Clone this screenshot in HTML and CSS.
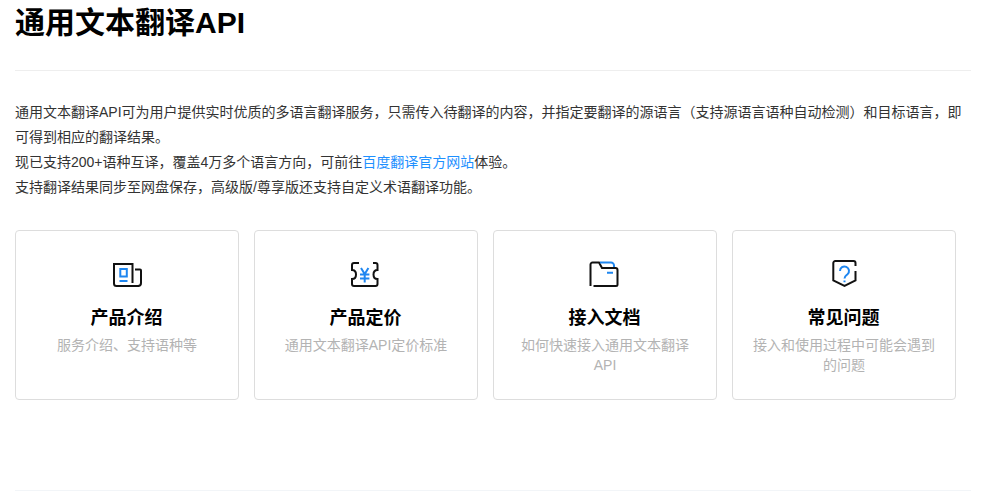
FILE: index.html
```html
<!DOCTYPE html>
<html lang="zh-CN">
<head>
  <meta charset="UTF-8">
  <meta name="viewport" content="width=device-width, initial-scale=1.0">
  <title>通用文本翻译API</title>
  <link rel="stylesheet" href="styles.css">
</head>
<body>

  <div class="page">
    <h1>通用文本翻译API</h1>

    <div class="intro">
      <p>通用文本翻译API可为用户提供实时优质的多语言翻译服务，只需传入待翻译的内容，并指定要翻译的源语言（支持源语言语种自动检测）和目标语言，即可得到相应的翻译结果。</p>
      <p>现已支持200+语种互译，覆盖4万多个语言方向，可前往<a href="#">百度翻译官方网站</a>体验。</p>
      <p>支持翻译结果同步至网盘保存，高级版/尊享版还支持自定义术语翻译功能。</p>
    </div>

    <div class="cards">
      <a class="card" href="#">
        <svg class="card-icon" viewBox="0 0 32 32" fill="none" stroke-width="2">
          <path class="ink" d="M28 27H5.5A2.5 2.5 0 0 1 3 24.5V5h18.500v19"/>
          <path class="ink" d="M24 10.500h5a1 1 0 0 1 1 1V24a3 3 0 0 1-3 3"/>
          <path class="accent" d="M9.300 10h6.500v7.500H9.300zM8.500 22h8"/>
        </svg>
        <h3>产品介绍</h3>
        <p>服务介绍、支持语种等</p>
      </a>
      <a class="card" href="#">
        <svg class="card-icon" viewBox="0 0 32 32" fill="none" stroke-width="2">
          <path class="ink" d="M9 4H4a2 2 0 0 0-2 2v5c2.500 0 4 2 4 4.500S4.500 20 2 20v5a2 2 0 0 0 2 2h21.500a2 2 0 0 0 2-2v-5c-2.500 0-4-2-4-4.500s1.500-4.500 4-4.500V6a2 2 0 0 0-2-2H23"/>
          <path class="accent" d="M11 9l3.700 6 3.700-6M14.700 15v8.500M10 15.500h9.400M10 19.500h9.400"/>
        </svg>
        <h3>产品定价</h3>
        <p>通用文本翻译API定价标准</p>
      </a>
      <a class="card" href="#">
        <svg class="card-icon" viewBox="0 0 32 32" fill="none" stroke-width="2">
          <path class="ink" d="M1.500 27V5.500a2 2 0 0 1 2-2H10l3 5.500h13.500a2 2 0 0 1 2 2v14.500A1.500 1.500 0 0 1 27 27H4.500"/>
          <path class="accent" d="M11 3.500h11a3 3 0 0 1 3 3V8M18 13.700h6"/>
        </svg>
        <h3>接入文档</h3>
        <p>如何快速接入通用文本翻译API</p>
      </a>
      <a class="card" href="#">
        <svg class="card-icon" viewBox="0 0 32 32" fill="none" stroke-width="2">
          <path class="ink" d="M27.500 7V4a2 2 0 0 0-2-2H7.300a2 2 0 0 0-2 2v17.500L16.500 27l11-5.500V12"/>
          <path class="accent" d="M12 12a4.500 4.500 0 1 1 7.500 3.300c-1.800 1.500-3 2.200-3 4.200M16.500 21.500v1.800"/>
        </svg>
        <h3>常见问题</h3>
        <p>接入和使用过程中可能会遇到的问题</p>
      </a>
    </div>

    <div class="bottom-line"></div>
  </div>

</body>
</html>
```

FILE: styles.css
```css
body {
  margin: 0;
  background-color: #fff;
  font-family: "Liberation Sans", Arial, "Noto Sans CJK SC", sans-serif;
  color: #333;
}
.page {
  width: 956px;
  padding-left: 15px;
}
h1 {
  margin: 0;
  height: 70px;
  font-size: 30px;
  line-height: 46px;
  font-weight: bold;
  color: #000;
  border-bottom: 1px solid #eee;
}
.intro {
  padding-top: 29px;
  font-size: 14px;
  line-height: 25px;
}
.intro p {
  margin: 0;
}
.intro a {
  color: #1e90ff;
  text-decoration: none;
}
.cards {
  display: flex;
  gap: 15px;
  margin-top: 30px;
}
.card {
  box-sizing: border-box;
  width: 224px;
  height: 170px;
  padding: 28px 18px 0;
  border: 1px solid #ddd;
  border-radius: 4px;
  text-align: center;
  text-decoration: none;
}
.card-icon {
  display: block;
  width: 32px;
  height: 32px;
  margin: 0 auto;
}
.ink {
  stroke: #111;
}
.accent {
  stroke: #1e86f0;
}
.card h3 {
  margin: 13px 0 0;
  padding-right: 1px;
  font-size: 18px;
  line-height: 28px;
  color: #000;
}
.card p {
  margin: 3px 0 0;
  font-size: 14px;
  line-height: 20px;
  color: #b3b3b3;
}
.bottom-line {
  margin-top: 90px;
  height: 1px;
  background-color: #f2f5f8;
}
```
